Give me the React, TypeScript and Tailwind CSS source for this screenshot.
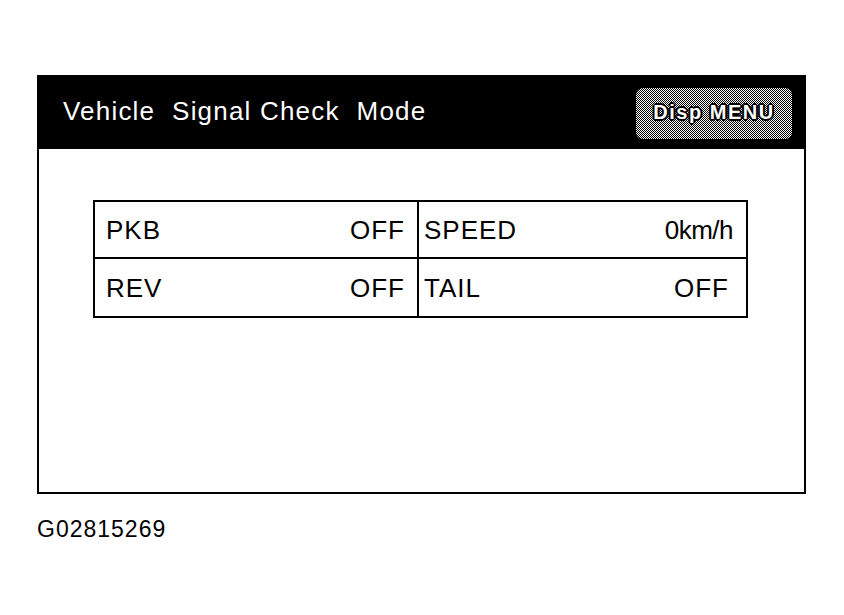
const rows = [
  [
    { label: "PKB", value: "OFF", valueClass: "tracking-[1px] pr-[12px]" },
    { label: "SPEED", value: "0km/h", valueClass: "tracking-[-0.5px] pr-[13px]" },
  ],
  [
    { label: "REV", value: "OFF", valueClass: "tracking-[1px] pr-[12px]" },
    { label: "TAIL", value: "OFF", valueClass: "tracking-[1px] pr-[17px]" },
  ],
];

const App = () => {
  return (
    <div className="w-[844px] h-[615px] bg-white font-['Liberation_Sans',Arial,sans-serif] text-black overflow-hidden">
      <div className="pt-[75px] pl-[37px]">
        {/* screen frame */}
        <div className="w-[769px] h-[419px] border-2 border-black flex flex-col">
          <div className="h-[72px] bg-black flex items-center justify-between pl-[24px] pr-[12px]">
            <h1 className="text-[26px] leading-none tracking-[1.2px] text-white whitespace-pre pb-[5px]">
              Vehicle  Signal Check  Mode
            </h1>
            <div className="w-[156px] h-[51px] rounded-[7px] bg-[repeating-conic-gradient(#ffffff_0_25%,#000000_0_50%)] bg-[length:2px_2px] flex items-center justify-center pb-[3px]">
              <span className="text-[20px] leading-none font-bold tracking-[1.5px] text-white [-webkit-text-stroke:1px_#ffffff] [paint-order:stroke_fill] [text-shadow:2px_0_#000,-2px_0_#000,0_2px_#000,0_-2px_#000,1px_1px_#000,-1px_-1px_#000,1px_-1px_#000,-1px_1px_#000]">
                Disp MENU
              </span>
            </div>
          </div>

          <div className="pt-[51px] pl-[54px]">
            <div className="w-[655px] border-2 border-black grid grid-cols-[324px_1fr]">
              {rows.map((row, ri) =>
                row.map((cell, ci) => (
                  <div
                    key={`${ri}-${ci}`}
                    className={`h-[57px] flex items-center justify-between text-[26px] leading-none ${
                      ri === 0 ? "border-b-2 border-black" : ""
                    } ${ci === 0 ? "border-r-2 border-black pl-[11px]" : "pl-[5px]"}`}
                  >
                    <span className="tracking-[1px]">{cell.label}</span>
                    <span className={cell.valueClass}>{cell.value}</span>
                  </div>
                ))
              )}
            </div>
          </div>
        </div>

        <p className="mt-[24px] text-[23px] leading-none tracking-[1px]">G02815269</p>
      </div>
    </div>
  );
};

export default App;
